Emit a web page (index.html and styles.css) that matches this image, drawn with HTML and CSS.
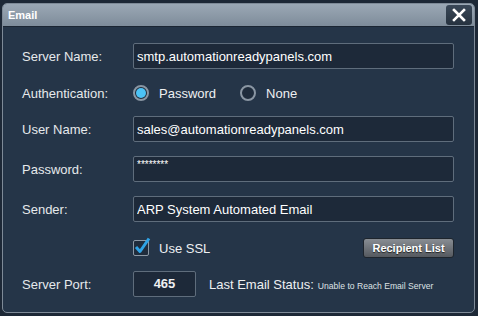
FILE: index.html
```html
<!DOCTYPE html>
<html lang="en">
<head>
    <meta charset="UTF-8">
    <title>Email</title>
    <link rel="stylesheet" href="styles.css">
</head>
<body>
    <div class="dialog">
        <div class="titlebar">
            <span class="title">Email</span>
            <button class="close" type="button">
                <svg width="14" height="14" viewBox="0 0 14 14">
                    <path d="M2 2 L12 12 M12 2 L2 12" stroke="#fff" stroke-width="2.6" stroke-linecap="square"/>
                </svg>
            </button>
        </div>
        <div class="content">
            <div class="row row-server">
                <label class="label">Server Name:</label>
                <input class="field" type="text" value="smtp.automationreadypanels.com">
            </div>
            <div class="row row-auth">
                <span class="label">Authentication:</span>
                <span class="radio checked"></span>
                <span class="radio-text">Password</span>
                <span class="radio"></span>
                <span class="radio-text">None</span>
            </div>
            <div class="row row-user">
                <label class="label">User Name:</label>
                <input class="field" type="text" value="sales@automationreadypanels.com">
            </div>
            <div class="row row-pass">
                <label class="label">Password:</label>
                <div class="field stars">********</div>
            </div>
            <div class="row row-sender">
                <label class="label">Sender:</label>
                <input class="field" type="text" value="ARP System Automated Email">
            </div>
            <div class="row row-ssl">
                <span class="label"></span>
                <svg class="check" width="18" height="19" viewBox="0 0 18 19">
                    <rect x="0.5" y="3.5" width="15" height="15" rx="1.5" fill="#1f2c3c" stroke="#8c98a5"/>
                    <path d="M3 10 L7 14.5 L16 1.5" fill="none" stroke="#2fa3e6" stroke-width="3" stroke-linejoin="round"/>
                </svg>
                <span class="ssl-text">Use SSL</span>
                <button class="btn" type="button">Recipient List</button>
            </div>
            <div class="row row-port">
                <label class="label">Server Port:</label>
                <div class="port">465</div>
                <span class="status-label">Last Email Status:</span>
                <span class="status">Unable to Reach Email Server</span>
            </div>
        </div>
    </div>
</body>
</html>
```

FILE: styles.css
```css
body {
    margin: 0;
    background-color: #1d2836;
    font-family: "Liberation Sans", Arial, sans-serif;
    color: #eef0f2;
}
.dialog {
    margin: 3px 0 0 2px;
    width: 471px;
    height: 308px;
    border: 1px solid #7e8a97;
    border-radius: 5px;
    background-color: #253548;
    overflow: hidden;
}
.titlebar {
    height: 22px;
    display: flex;
    align-items: center;
    justify-content: space-between;
    background: linear-gradient(#9ba8b5, #7e8c9a);
    border-bottom: 1px solid #1b2633;
    padding: 0 2px 0 5px;
}
.title {
    font-size: 11px;
    font-weight: bold;
    color: #fff;
}
.close {
    width: 26px;
    height: 20px;
    border: none;
    border-radius: 3px;
    background: linear-gradient(#3a4858, #26323f);
    display: flex;
    align-items: center;
    justify-content: center;
    padding: 0;
}
.content {
    padding: 16px 0 0 19px;
}
.row {
    display: flex;
    align-items: center;
}
.label {
    width: 111px;
    flex: none;
    font-size: 13px;
    color: #e6e9ec;
}
.field {
    box-sizing: border-box;
    width: 321px;
    height: 26px;
    background-color: #1d2939;
    border: 1px solid #5f6d7c;
    border-radius: 2px;
    color: #fff;
    font-family: "Liberation Sans", Arial, sans-serif;
    font-size: 13px;
    padding: 0 3px;
    outline: none;
}
.stars {
    padding-top: 1px;
    font-size: 10px;
    line-height: 14px;
}
.row-auth {
    margin-top: 11px;
    height: 26px;
}
.row-user {
    margin-top: 10px;
}
.row-pass,
.row-sender {
    margin-top: 14px;
}
.row-ssl {
    margin-top: 14px;
    height: 24px;
}
.row-port {
    margin-top: 11px;
}
.radio {
    box-sizing: border-box;
    width: 16px;
    height: 16px;
    border: 2px solid #8a96a3;
    border-radius: 50%;
    background-color: #1f2c3c;
    position: relative;
}
.radio.checked::after {
    content: "";
    position: absolute;
    left: 1px;
    top: 1px;
    width: 10px;
    height: 10px;
    border-radius: 50%;
    background-color: #4cc2f5;
}
.radio-text {
    font-size: 13px;
    margin: 0 24px 0 10px;
}
.radio-text:last-child {
    margin-right: 0;
    margin-left: 10px;
}
.check {
    margin-top: -4px;
}
.ssl-text {
    font-size: 13px;
    margin-left: 8px;
}
.btn {
    margin-left: auto;
    margin-right: 20px;
    width: 91px;
    height: 20px;
    border: 1px solid #1e252d;
    border-radius: 3px;
    background: linear-gradient(#888d93, #55595f);
    color: #fff;
    font-family: "Liberation Sans", Arial, sans-serif;
    font-size: 11px;
    font-weight: bold;
    text-shadow: 0 1px 1px #222;
    padding: 0;
}
.port {
    box-sizing: border-box;
    width: 63px;
    height: 26px;
    background-color: #1d2939;
    border: 1px solid #5f6d7c;
    border-radius: 2px;
    font-size: 13px;
    font-weight: bold;
    text-align: center;
    line-height: 24px;
}
.status-label {
    font-size: 13px;
    margin-left: 13px;
}
.status {
    font-size: 8.6px;
    margin-left: 4px;
    margin-top: 3px;
    color: #dde1e5;
}
```
